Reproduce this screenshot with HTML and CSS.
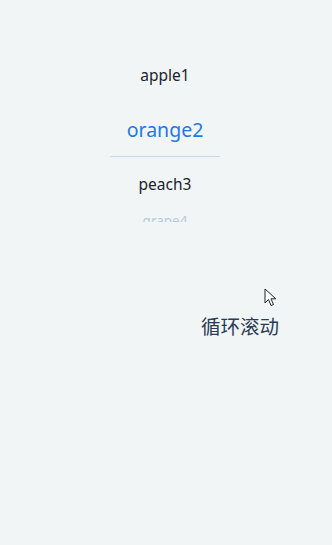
FILE: index.html
```html
<!DOCTYPE html>
<html>
<head>
<meta charset="utf-8">
<link rel="stylesheet" href="styles.css">
</head>
<body>
<div class="page">
  <div class="picker">
    <div class="item">apple1</div>
    <div class="item selected">orange2</div>
    <div class="item">peach3</div>
    <div class="item fade">grape4</div>
  </div>
  <div class="label">循环滚动</div>
  <svg class="cursor" width="13" height="19" viewBox="0 0 13 19">
    <path d="M1 1 L1 15 L4.5 11.5 L7 17.5 L9.5 16.5 L7 10.8 L11.8 10.8 Z" fill="#fff" stroke="#222" stroke-width="1" stroke-linejoin="round"/>
  </svg>
</div>
</body>
</html>
```
FILE: styles.css
```css
html, body {
  margin: 0;
  padding: 0;
  background: #f1f5f5;
}
.page {
  position: relative;
  width: 332px;
  height: 545px;
  font-family: "Noto Sans", "Noto Sans CJK SC", sans-serif;
}
.picker {
  width: 110px;
  margin-left: 110px;
  padding-top: 48px;
  height: 174px;
  overflow: hidden;
  display: flex;
  flex-direction: column;
}
.item {
  flex: none;
  height: 54px;
  display: flex;
  align-items: center;
  justify-content: center;
  font-size: 15.5px;
  color: #1c2230;
}
.selected {
  font-size: 19.5px;
  color: #1f78e4;
  border-bottom: 1px solid #c9d8e8;
}
.fade {
  align-items: flex-start;
  padding-top: 1px;
  font-size: 13.5px;
  color: #b5cbe3;
}
.label {
  margin-top: 91px;
  padding-left: 201px;
  font-size: 19.5px;
  line-height: 26px;
  color: #2b3a55;
  font-family: "Noto Sans CJK SC", sans-serif;
}
.cursor {
  position: absolute;
  left: 264px;
  top: 288px;
}
```
